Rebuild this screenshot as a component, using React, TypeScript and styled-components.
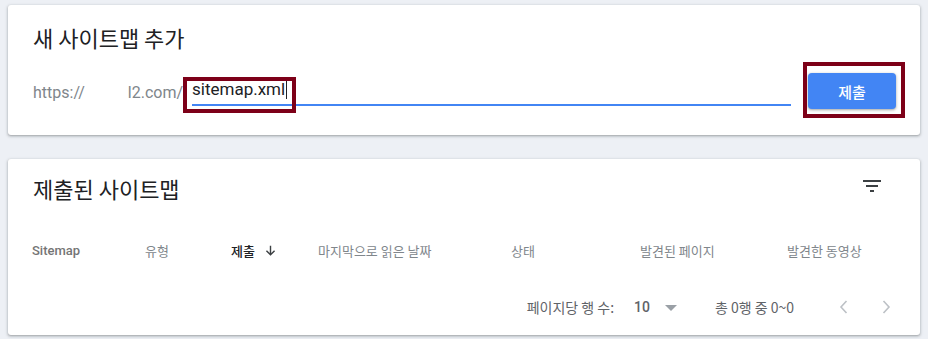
import React from "react";
import styled, { createGlobalStyle } from "styled-components";

const Global = createGlobalStyle`
  html, body { margin: 0; padding: 0; background: #edf0f5; }
  body { font-family: Roboto, "Noto Sans CJK KR", "Noto Sans", sans-serif; color: #202124; }
`;

const Page = styled.div`
  width: 928px;
  height: 339px;
  box-sizing: border-box;
  padding: 5px 8px 0 8px;
  display: flex;
  flex-direction: column;
  gap: 24px;
  overflow: hidden;
`;

const Card = styled.section<{ $h: number }>`
  position: relative;
  width: 912px;
  height: ${(p) => p.$h}px;
  box-sizing: border-box;
  background: #fff;
  border-radius: 3px;
  box-shadow: 0 1px 2px rgba(60, 64, 67, 0.3), 0 1px 3px 1px rgba(60, 64, 67, 0.15);
`;

const Title = styled.h2<{ $top: number }>`
  margin: 0;
  padding: ${(p) => p.$top}px 0 0 25px;
  font-family: "Noto Sans CJK KR", Roboto, sans-serif;
  font-weight: 400;
  font-size: 22px;
  line-height: 30px;
  color: #202124;
`;

const InputRow = styled.div`
  display: flex;
  align-items: flex-start;
  padding: 18px 0 0 25px;
`;

const Prefix = styled.span`
  font-family: Roboto, sans-serif;
  font-size: 16px;
  color: #80868b;
  display: flex;
  align-items: center;
  width: 159px;
  height: 36px;
  box-sizing: border-box;
  padding-top: 8px;
`;

const Hidden = styled.span`
  display: inline-block;
  width: 43px;
`;

const Field = styled.div`
  width: 599px;
  height: 36px;
  display: flex;
  align-items: center;
  border-bottom: 2px solid #4285f4;
  box-sizing: border-box;
`;

const FieldText = styled.span`
  font-family: Roboto, sans-serif;
  font-size: 17px;
  color: #202124;
  padding-top: 4px;
  display: flex;
  align-items: center;
`;

const Caret = styled.span`
  display: inline-block;
  width: 1px;
  height: 20px;
  background: #202124;
  margin-left: 1px;
`;

const Marker = styled.div<{ $l: number; $t: number; $w: number; $h: number }>`
  position: absolute;
  left: ${(p) => p.$l}px;
  top: ${(p) => p.$t}px;
  width: ${(p) => p.$w}px;
  height: ${(p) => p.$h}px;
  box-sizing: border-box;
  border: 4px solid #7d0018;
  pointer-events: none;
`;

const SubmitButton = styled.button`
  margin: 3px 0 0 17px;
  width: 88px;
  height: 36px;
  border: none;
  border-radius: 4px;
  background: #4285f4;
  color: #fff;
  font-family: "Noto Sans CJK KR", Roboto, sans-serif;
  font-size: 15px;
  font-weight: 500;
  box-shadow: 0 1px 2px rgba(60, 64, 67, 0.3), 0 1px 3px 1px rgba(60, 64, 67, 0.15);
  cursor: pointer;
`;

const HeaderBar = styled.div`
  display: flex;
  justify-content: space-between;
  align-items: flex-start;
  height: 48px;
`;

const IconBtn = styled.div`
  width: 40px;
  height: 40px;
  margin: 7px 28px 0 0;
  display: flex;
  align-items: center;
  justify-content: center;
`;

const Table = styled.div`
  display: grid;
  grid-template-columns: 113px 86px 87px 193px 129px 147px 1fr;
  margin-top: 26px;
  padding-left: 24px;
  height: 34px;
  align-items: center;
`;

const Th = styled.div<{ $active?: boolean; $latin?: boolean }>`
  font-family: ${(p) => (p.$latin ? "Roboto, sans-serif" : '"Noto Sans CJK KR", Roboto, sans-serif')};
  font-size: 13px;
  font-weight: ${(p) => (p.$latin || p.$active ? 500 : 400)};
  color: ${(p) => (p.$active ? "#202124" : p.$latin ? "#757575" : "#80868b")};
  display: flex;
  align-items: center;
  gap: 9px;
  white-space: nowrap;
`;

const Footer = styled.div`
  display: flex;
  justify-content: flex-end;
  align-items: center;
  margin-top: 25px;
  padding-right: 22px;
  height: 30px;
  font-family: "Noto Sans CJK KR", Roboto, sans-serif;
  font-size: 14px;
  color: #5f6368;
`;

const PerPage = styled.span`
  margin-right: 20px;
`;

const Count = styled.span`
  font-family: Roboto, sans-serif;
  font-weight: 500;
  font-size: 14px;
  color: #5f6368;
`;

const Tri = styled.span`
  width: 0;
  height: 0;
  border-left: 6px solid transparent;
  border-right: 6px solid transparent;
  border-top: 6px solid #9aa0a6;
  margin: 2px 38px 0 15px;
`;

const Range = styled.span`
  width: 85px;
  margin-right: 32px;
  white-space: nowrap;
`;

const Nav = styled.div`
  display: flex;
  gap: 18px;
  align-items: center;
`;

const Chev = ({ dir }: { dir: "l" | "r" }) => (
  <svg width="24" height="24" viewBox="0 0 24 24">
    <path
      d={dir === "l" ? "M14.5 6 9 12l5.5 6" : "M9.5 6 15 12l-5.5 6"}
      fill="none"
      stroke="#bdc1c6"
      strokeWidth="1.6"
    />
  </svg>
);

export default function App() {
  return (
    <>
      <Global />
      <Page>
        <Card $h={130}>
          <Title $top={17}>새 사이트맵 추가</Title>
          <InputRow>
            <Prefix>
              https://<Hidden />l2.com/
            </Prefix>
            <Field>
              <FieldText>
                sitemap.xml
                <Caret />
              </FieldText>
            </Field>
            <SubmitButton>제출</SubmitButton>
          </InputRow>
          <Marker $l={175} $t={72} $w={113} $h={36} />
          <Marker $l={795} $t={57} $w={102} $h={56} />
        </Card>
        <Card $h={176}>
          <HeaderBar>
            <Title $top={14}>제출된 사이트맵</Title>
            <IconBtn>
              <svg width="24" height="24" viewBox="0 0 24 24">
                <path d="M10 18h4v-2h-4v2zM3 6v2h18V6H3zm3 7h12v-2H6v2z" fill="#3c4043" />
              </svg>
            </IconBtn>
          </HeaderBar>
          <Table>
            <Th $latin>Sitemap</Th>
            <Th>유형</Th>
            <Th $active>
              제출
              <svg width="13" height="13" viewBox="0 0 24 24">
                <path d="M12 3v17M4.5 12.5 12 20l7.5-7.5" fill="none" stroke="#3c4043" strokeWidth="2.6" />
              </svg>
            </Th>
            <Th>마지막으로 읽은 날짜</Th>
            <Th>상태</Th>
            <Th>발견된 페이지</Th>
            <Th>발견한 동영상</Th>
          </Table>
          <Footer>
            <PerPage>페이지당 행 수:</PerPage>
            <Count>10</Count>
            <Tri />
            <Range>총 0행 중 0~0</Range>
            <Nav>
              <Chev dir="l" />
              <Chev dir="r" />
            </Nav>
          </Footer>
        </Card>
      </Page>
    </>
  );
}
